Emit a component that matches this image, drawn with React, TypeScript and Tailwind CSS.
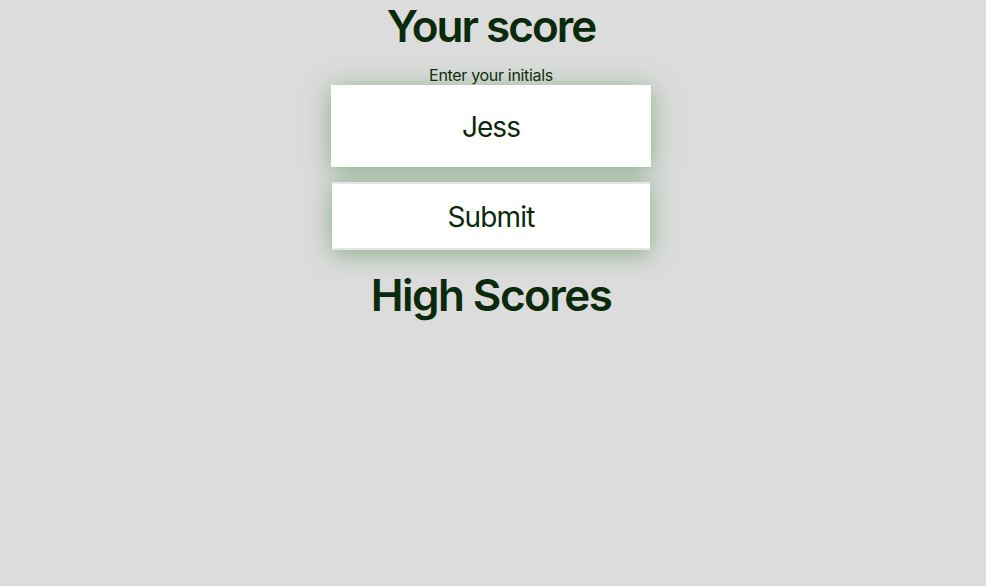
export default function App() {
  return (
    <div className="min-h-[586px] w-full bg-[#dcdcdc] text-[#0b2a0b] flex flex-col items-center pr-[4px]" style={{ fontFamily: "Inter, 'Noto Sans', sans-serif" }}>
      <h1 className="text-[44px] font-semibold leading-[53px] mt-0 tracking-[-0.045em]">Your score</h1>
      <label className="text-[16px] mt-[12px] leading-[20px] tracking-[-0.02em]">Enter your initials</label>
      <div className="w-[320px] h-[82px] pt-[2px] bg-white flex items-center justify-center text-[28px] tracking-[-0.035em] shadow-[0_4px_24px_rgba(60,130,60,0.5)]">Jess</div>
      <button className="mt-[15px] w-[318px] h-[68px] pt-[2px] bg-white border-t-2 border-b-2 border-[#e4e8e4] flex items-center justify-center text-[28px] tracking-[-0.03em] shadow-[0_4px_24px_rgba(60,130,60,0.5)]">Submit</button>
      <h2 className="text-[44px] font-semibold leading-[53px] mt-[19px] tracking-[-0.035em]">High Scores</h2>
    </div>
  );
}
